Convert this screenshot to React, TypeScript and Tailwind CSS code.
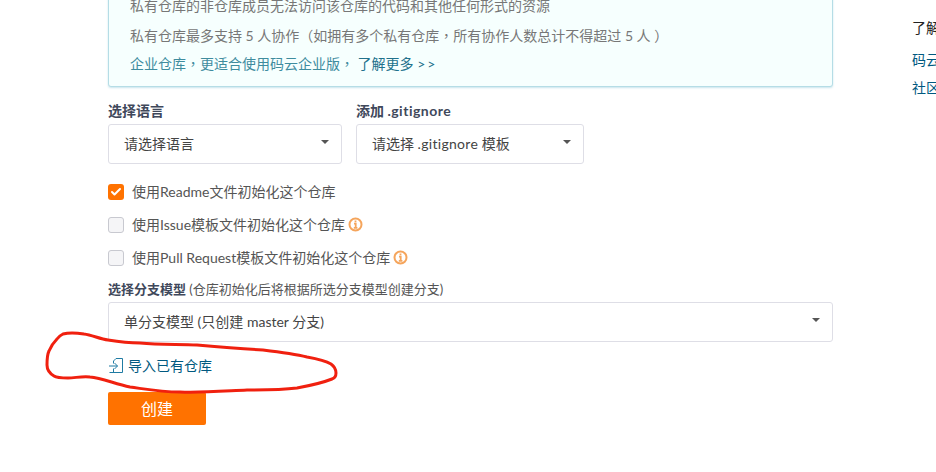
import type { ReactNode } from 'react';
import { Check } from 'lucide-react';

const fontStack = "font-['Lato','Noto_Sans_CJK_SC',sans-serif]";

// centred full-width punctuation, as in the reference's CJK face
const Punct = ({ children }: { children: string }) => (
  <span className="font-['Noto_Sans_CJK_TC',sans-serif]">{children}</span>
);

const Caret = () => (
  <span className="w-0 h-0 border-x-[4px] border-x-transparent border-t-[4px] border-t-[#555]" />
);

const InfoMark = () => (
  <svg width="15" height="15" viewBox="0 0 15 15" className="ml-[3px] text-[#f5a55c]" fill="none" stroke="currentColor">
    <circle cx="7.5" cy="7.5" r="6" strokeWidth="2" />
    <path d="M7.5 3.4v1.9M6 6.7h1.7v3.8M5.8 10.8h3.6" strokeWidth="1.8" />
  </svg>
);

const SelectBox = ({ label, className }: { label: ReactNode; className: string }) => (
  <div className={`h-10 flex items-center justify-between pl-[15px] pr-[12px] bg-white border border-[#dedee6] rounded-[3px] text-sm text-[#444] ${className}`}>
    <span>{label}</span>
    <span className="flex -mt-[4px]"><Caret /></span>
  </div>
);

const CheckRow = ({ label, checked, info }: { label: string; checked?: boolean; info?: boolean }) => (
  <div className="h-[33px] flex items-center text-sm text-[#555]">
    {checked ? (
      <span className="w-4 h-4 mr-[8px] rounded-[3px] bg-[#ff7200] flex items-center justify-center">
        <Check size={12} strokeWidth={4} className="text-white" />
      </span>
    ) : (
      <span className="w-4 h-4 mr-[8px] rounded-[3px] border border-[#c8c9d0] bg-[#f5f5f7]" />
    )}
    <span>{label}</span>
    {info && <InfoMark />}
  </div>
);

export default function App() {
  return (
    <div className={`relative w-[936px] h-[472px] overflow-hidden bg-white ${fontStack}`}>
      <div className="flex">
        <div className="w-[725px] ml-[108px] shrink-0">
          <div className="-mt-[9px] h-[96px] pl-[21px] bg-[#f6fffe] border border-[#b5dde6] rounded-[3px] shadow-[0_1px_2px_rgba(120,190,210,0.4)] text-sm text-[#777] leading-[28px]">
            <p className="h-[28.5px]">私有仓库的非仓库成员无法访问该仓库的代码和其他任何形式的资源</p>
            <p className="h-[28.5px]">私有仓库最多支持 5 人协作<Punct>（</Punct>如拥有多个私有仓库<Punct>，</Punct>所有协作人数总计不得超过 5 人 <Punct>）</Punct></p>
            <p className="h-[28.5px] text-[#3f8c9e]">企业仓库<Punct>，</Punct>更适合使用码云企业版<Punct>，</Punct> <span className="text-[#21718c]">了解更多 <span className="tracking-[2px]">&gt;&gt;</span></span></p>
          </div>

          <div className="flex gap-[14px] mt-[14px]">
            <div>
              <div className="h-5 text-sm font-bold text-[#40485b] leading-5">选择语言</div>
              <SelectBox label="请选择语言" className="w-[234px] mt-[3px]" />
            </div>
            <div>
              <div className="h-5 text-sm font-bold text-[#40485b] leading-5">添加 <span className="tracking-[0.5px]">.gitignore</span></div>
              <SelectBox label={<>请选择 <span className="tracking-[0.3px]">.gitignore</span> 模板</>} className="w-[228px] mt-[3px]" />
            </div>
          </div>

          <div className="mt-[11px]">
            <CheckRow label="使用Readme文件初始化这个仓库" checked />
            <CheckRow label="使用Issue模板文件初始化这个仓库" info />
            <CheckRow label="使用Pull Request模板文件初始化这个仓库" info />
          </div>

          <div className="mt-[5px] h-5 text-[13px] leading-5 text-[#555]">
            <span className="font-bold text-[#40485b]">选择分支模型</span> (仓库初始化后将根据所选分支模型创建分支)
          </div>
          <SelectBox label="单分支模型 (只创建 master 分支)" className="mt-[3px] w-full" />

          <div className="mt-[14px] h-5 flex items-center text-sm text-[#005980]">
            <svg width="16" height="16" viewBox="0 0 16 16" fill="none" stroke="#1f7ba3" strokeWidth="1" className="mr-[4px]">
              <path d="M5.5 5.5V3l2.5-2.5h6.5v14h-13" />
              <path d="M1 8h8.5M6.5 5l3 3-3 3" />
              <path d="M5.5 10.5v4" />
            </svg>
            <span>导入已有仓库</span>
          </div>

          <div className="mt-[16px] w-[98px] h-[33px] flex items-center justify-center bg-[#ff7200] rounded-[2px] text-base text-white">
            创建
          </div>
        </div>

        <div className="ml-[79px] pt-[18px] shrink-0 w-[200px]">
          <div className="text-sm text-[#222] leading-5">了解更多</div>
          <div className="mt-[12px] text-sm text-[#005980] leading-5">码云企业版</div>
          <div className="mt-[8px] text-sm text-[#005980] leading-5">社区版</div>
        </div>
      </div>

      {/* hand drawn annotation round the import link */}
      <svg width="936" height="472" className="absolute left-0 top-0 pointer-events-none" fill="none">
        <path
          d="M63 334C70 332 78 333 84 334C92 335 100 339 108 340C120 342 130 343 140 343C160 345 180 344 197 345C220 347 245 349 263 350C280 352 295 354 307 357C318 359 326 361 331 364C335 367 336 370 336 373C336 376 335 378 332 379C322 383 308 386 297 388C280 390 262 390 247 390C225 391 200 393 180 392C160 392 145 389 130 387C115 384 102 378 90 377C82 376 75 378 68 378C62 378 57 378 54 376C49 373 47 369 47 365C47 360 47 355 49 351C51 346 54 342 57 339C59 336 61 335 63 334Z"
          stroke="#f0200f"
          strokeWidth="3"
          strokeLinejoin="round"
        />
      </svg>
    </div>
  );
}
